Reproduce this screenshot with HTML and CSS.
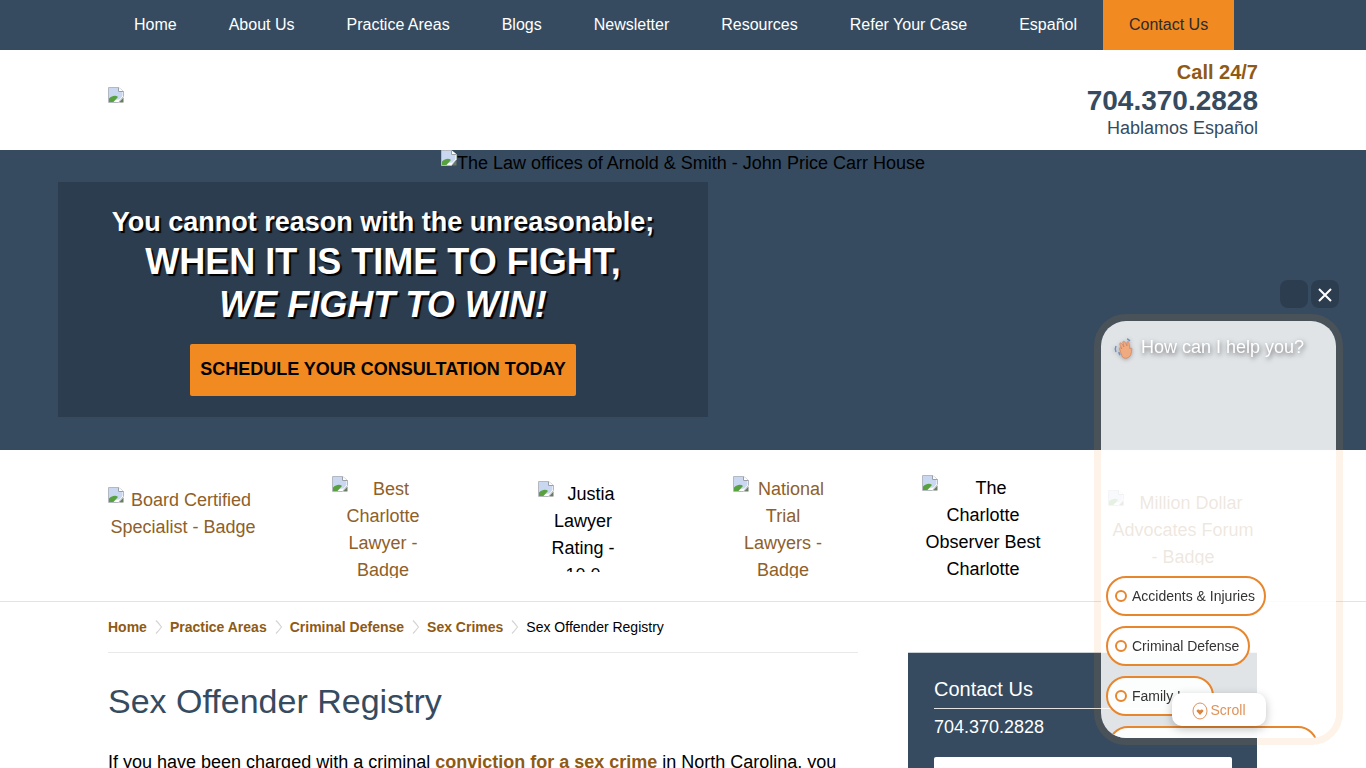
FILE: index.html
```html
<!doctype html>
<html>
<head>
    <meta charset="utf-8">
    <title>Sex Offender Registry</title>
    <link rel="stylesheet" href="styles.css">
</head>

<body>
<!-- broken image icon, reused everywhere -->
<svg class="sprite" width="0" height="0">
    <symbol id="broken" viewBox="0 0 16 16">
        <path d="M.5.5h10l5 4v5l-5 6h-10z" fill="#fff" stroke="#b4b8c0"/>
        <path d="M1 1h9.500v4h4v4l-3 3.500-10.500 1z" fill="#c9d7f1"/>
        <path d="M1 15v-3.500c3-3 7-3.500 9-1.500l-4.500 5z" fill="#57a23f"/>
        <path d="M10.500.5v4h5" fill="#fff" stroke="#9a9ea6"/>
        <path d="M11 15.500l4.500-5v5z" fill="#6b7a62"/>
    </symbol>
    <symbol id="crumb" viewBox="0 0 8 14">
        <path d="M1 0.500c2 2 4 4.500 5.500 6.500-1.500 2-3.500 4.500-5.500 6.500" fill="none" stroke="#d4d4d4" stroke-width="1.200"/>
    </symbol>
</svg>

<nav class="top-nav">
    <a href="#">Home</a>
    <a href="#">About Us</a>
    <a href="#">Practice Areas</a>
    <a href="#">Blogs</a>
    <a href="#">Newsletter</a>
    <a href="#">Resources</a>
    <a href="#">Refer Your Case</a>
    <a href="#">Español</a>
    <a href="#" class="top-nav-contact">Contact Us</a>
</nav>

<header class="site-header">
    <svg class="broken"><use href="#broken"/></svg>
    <div class="site-phone">
        <p class="call-label">Call 24/7</p>
        <p class="call-number">704.370.2828</p>
        <p class="call-note">Hablamos Español</p>
    </div>
</header>

<section class="hero">
    <div class="hero-photo"><svg class="broken"><use href="#broken"/></svg>The Law offices of Arnold &amp; Smith - John Price Carr House</div>
    <div class="hero-box">
        <p class="hero-line1">You cannot reason with the unreasonable;</p>
        <p class="hero-line2">WHEN IT IS TIME TO FIGHT,</p>
        <p class="hero-line3">WE FIGHT TO WIN!</p>
        <a href="#" class="hero-button">SCHEDULE YOUR CONSULTATION TODAY</a>
    </div>
</section>

<section class="badges">
    <div class="badge-cell"><a href="#" class="badge badge-1"><svg class="broken"><use href="#broken"/></svg>Board Certified Specialist - Badge</a></div>
    <div class="badge-cell"><a href="#" class="badge badge-2"><svg class="broken"><use href="#broken"/></svg>Best Charlotte Lawyer - Badge</a></div>
    <div class="badge-cell"><div class="badge badge-3"><svg class="broken"><use href="#broken"/></svg>Justia Lawyer Rating - 10.0</div></div>
    <div class="badge-cell"><a href="#" class="badge badge-4"><svg class="broken"><use href="#broken"/></svg>National Trial Lawyers - Badge</a></div>
    <div class="badge-cell"><div class="badge badge-5"><svg class="broken"><use href="#broken"/></svg>The Charlotte Observer Best Charlotte</div></div>
    <div class="badge-cell"><a href="#" class="badge badge-6"><svg class="broken"><use href="#broken"/></svg>Million Dollar Advocates Forum - Badge</a></div>
</section>

<div class="content">
    <main class="article">
        <div class="crumbs">
            <a href="#">Home</a><svg class="crumb-sep"><use href="#crumb"/></svg>
            <a href="#">Practice Areas</a><svg class="crumb-sep"><use href="#crumb"/></svg>
            <a href="#">Criminal Defense</a><svg class="crumb-sep"><use href="#crumb"/></svg>
            <a href="#">Sex Crimes</a><svg class="crumb-sep"><use href="#crumb"/></svg>
            <span>Sex Offender Registry</span>
        </div>
        <h1>Sex Offender Registry</h1>
        <p class="article-text">If you have been charged with a criminal <a href="#">conviction for a sex crime</a> in North Carolina, you</p>
    </main>
    <aside class="side-contact">
        <h2>Contact Us</h2>
        <p class="side-phone">704.370.2828</p>
        <div class="side-field"></div>
    </aside>
</div>

<!-- chat widget floats over the page -->
<div class="chat-buttons">
    <span class="chat-btn"></span>
    <span class="chat-btn">
        <svg width="14" height="14" viewBox="0 0 14 14"><path d="M1 1l12 12M13 1L1 13" stroke="#fff" stroke-width="2"/></svg>
    </span>
</div>
<div class="chat">
    <div class="chat-inner">
        <p class="chat-hello">
            <svg class="chat-wave" width="24" height="24" viewBox="0 0 24 24">
                <path d="M7 14c-1-2 0-3 1-2l1 1-2-4c-1-2 1-3 2-1l2 3-1-4c-1-2 1-2 2-1l2 4 0-3c0-2 2-2 2 0l1 6c1-1 2-1 2 0 0 2-1 3-1 5-1 3-4 5-7 4-2-1-3-4-4-8z" fill="#f0aa80" stroke="#d9784a" stroke-width=".6"/>
                <path d="M3 10c-1 2-1 4 0 6M6 16c0 1 0 2 1 3M14 3c1 0 2 1 3 2" fill="none" stroke="#6f8fc4" stroke-width="1.500"/>
            </svg>
            How can I help you?
        </p>
        <div class="chat-options">
            <a href="#" class="chat-option"><i></i>Accidents &amp; Injuries</a>
            <a href="#" class="chat-option"><i></i>Criminal Defense</a>
            <a href="#" class="chat-option"><i></i>Family Law</a>
            <a href="#" class="chat-option chat-option-wide"><i></i>Immigration</a>
        </div>
    </div>
    <div class="chat-scroll">
        <svg width="16" height="18" viewBox="0 0 16 18">
            <ellipse cx="8" cy="9" rx="7" ry="8" fill="none" stroke="#e0935a"/>
            <path d="M8 13L4.800 9.500C4 8 6.500 6.500 8 8.500 9.500 6.500 12 8 11.200 9.500z" fill="#d9843f"/>
        </svg>
        Scroll
    </div>
</div>
</body>
</html>
```

FILE: styles.css
```css
html, body {
    margin: 0;
    height: 768px;
    overflow: hidden;
}

body {
    font-family: "Liberation Sans", Arial, sans-serif;
    font-size: 18px;
    line-height: 27px;
    color: #000;
    background: #fff;
}

p {
    margin: 0;
}

a {
    text-decoration: none;
}

.sprite {
    position: absolute;
}

.broken {
    width: 16px;
    height: 16px;
    vertical-align: top;
}

/* top bar */
.top-nav {
    display: flex;
    height: 50px;
    padding-left: 108px;
    background: #364b60;
}

.top-nav a {
    padding: 0 26px;
    font-size: 16px;
    line-height: 49px;
    color: #fff;
}

.top-nav .top-nav-contact {
    background: #f18a21;
    color: #2b2b2b;
}

/* logo + phone */
.site-header {
    display: flex;
    justify-content: space-between;
    box-sizing: border-box;
    height: 100px;
    padding: 37px 108px 0;
}

.site-phone {
    margin-top: -29px;
    text-align: right;
}

.call-label {
    font-size: 20px;
    font-weight: bold;
    line-height: 28px;
    color: #8f5a14;
}

.call-number {
    font-size: 28px;
    font-weight: bold;
    line-height: 28px;
    padding-top: 1px;
    margin-bottom: -1px;
    color: #364b60;
}

.call-note {
    font-size: 18px;
    line-height: 28px;
    color: #364b60;
}

/* hero */
.hero {
    height: 300px;
    background: #364b60;
}

.hero-photo {
    height: 32px;
    text-align: center;
    line-height: 27px;
}

.hero-box {
    display: flex;
    flex-direction: column;
    align-items: center;
    box-sizing: border-box;
    width: 650px;
    height: 235px;
    margin-left: 58px;
    padding-top: 21px;
    background: #2d3d50;
    color: #fff;
    text-shadow: 2px 2px 1px #000;
    font-weight: bold;
}

.hero-line1 {
    font-size: 27px;
    line-height: 38px;
}

.hero-line2 {
    font-size: 36px;
    line-height: 43px;
    margin-top: -1px;
}

.hero-line3 {
    font-size: 36px;
    font-style: italic;
    line-height: 43px;
}

.hero-button {
    box-sizing: border-box;
    width: 386px;
    height: 52px;
    margin-top: 18px;
    border-radius: 2px;
    background: #f18a21;
    color: #000;
    text-align: center;
    text-shadow: none;
    font-size: 18px;
    line-height: 51px;
}

/* badge row */
.badges {
    display: flex;
    box-sizing: border-box;
    height: 152px;
    padding-left: 83px;
    border-bottom: 1px solid #e3e3e3;
}

.badge-cell {
    flex: none;
    width: 200px;
}

.badge {
    display: block;
    margin: 0 auto;
    overflow: hidden;
    text-align: center;
    color: #000;
}

.badge .broken {
    float: left;
}

a.badge {
    color: #8f6029;
}

.badge-1 { width: 150px; margin-top: 37px; height: 54px; }
.badge-2 { width: 102px; margin-top: 26px; height: 102px; }
.badge-3 { width: 90px; margin-top: 31px; height: 91px; }
.badge-4 { width: 100px; margin-top: 26px; height: 102px; }
.badge-5 { width: 122px; margin-top: 25px; height: 108px; }
.badge-6 { width: 150px; margin-top: 40px; height: 75px; }

/* main content */
.content {
    display: flex;
    gap: 50px;
    padding-left: 108px;
}

.article {
    width: 750px;
}

.crumbs {
    display: flex;
    align-items: center;
    height: 50px;
    border-bottom: 1px solid #e9e9e9;
    font-size: 14px;
}

.crumbs a {
    font-weight: bold;
    color: #8f5a14;
}

.crumb-sep {
    width: 8px;
    height: 14px;
    margin: 0 7px 0 8px;
}

h1 {
    margin: 27px 0 0;
    font-size: 34px;
    font-weight: normal;
    line-height: 42px;
    color: #364b60;
}

.article-text {
    margin-top: 27px;
}

.article-text a {
    font-weight: bold;
    color: #8f5a14;
}

.side-contact {
    box-sizing: border-box;
    width: 349px;
    height: 200px;
    margin-top: 50px;
    border-top: 1px solid #c9d0d6;
    background: #364b60;
    color: #fff;
}

.side-contact h2 {
    margin: 0 25px 0 26px;
    padding: 23px 0 5px;
    border-bottom: 1px solid #e3e3e3;
    font-size: 20px;
    font-weight: normal;
    line-height: 27px;
}

.side-phone {
    padding: 5px 0 0 26px;
    line-height: 27px;
}

.side-field {
    width: 298px;
    height: 40px;
    margin: 16px 0 0 26px;
    border-radius: 2px;
    background: #fff;
}

/* chat widget */
.chat-buttons {
    position: fixed;
    top: 280px;
    left: 1280px;
    display: flex;
    gap: 3px;
}

.chat-btn {
    display: flex;
    align-items: center;
    justify-content: center;
    box-sizing: border-box;
    width: 28px;
    height: 28px;
    padding-top: 2px;
    border-radius: 8px;
    background: #2d3d50;
}

.chat {
    position: fixed;
    top: 314px;
    left: 1094px;
    box-sizing: border-box;
    width: 249px;
    height: 431px;
    border: 7px solid rgba(241, 138, 33, 0.1);
    border-radius: 32px;
}

.chat-inner {
    height: 417px;
    overflow: hidden;
    border-radius: 25px;
    background: rgba(255, 255, 255, 0.85);
}

.chat-hello {
    display: flex;
    align-items: center;
    gap: 4px;
    padding: 13px 0 0 12px;
    color: #fff;
    text-shadow: 1px 2px 5px rgba(0, 0, 0, 0.6);
}

.chat-wave {
    filter: blur(0.4px) drop-shadow(0 1px 2px rgba(0, 0, 0, 0.3));
}

.chat-options {
    display: flex;
    flex-direction: column;
    align-items: flex-start;
    gap: 10px;
    margin: 215px 0 0 5px;
}

.chat-option {
    display: flex;
    align-items: center;
    box-sizing: border-box;
    height: 40px;
    padding: 0 9px 0 7px;
    border: 2px solid #e8862e;
    border-radius: 20px;
    background: rgba(255, 255, 255, 0.9);
    font-size: 14px;
    color: #333;
}

.chat-option i {
    box-sizing: border-box;
    width: 12px;
    height: 12px;
    margin-right: 5px;
    border: 2px solid #e8862e;
    border-radius: 50%;
}

.chat-option-wide {
    width: 210px;
    margin-left: 2px;
}

.chat-scroll {
    position: absolute;
    top: 372px;
    left: 71px;
    display: flex;
    align-items: center;
    justify-content: center;
    box-sizing: border-box;
    gap: 2px;
    width: 94px;
    height: 33px;
    padding-top: 2px;
    border-radius: 10px;
    background: #fff;
    box-shadow: 0 3px 10px rgba(0, 0, 0, 0.25);
    font-size: 14px;
    color: #e0935a;
}
```
